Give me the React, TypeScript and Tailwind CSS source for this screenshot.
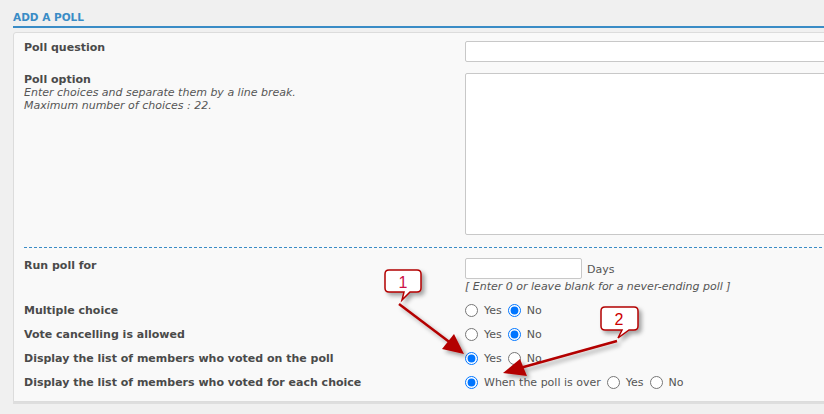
import React from 'react';

const font = { fontFamily: '"DejaVu Sans", Verdana, sans-serif' };

const Radio = ({ checked, name }: { checked?: boolean; name: string }) => (
  <input type="radio" name={name} defaultChecked={checked} className="m-0 w-[13px] h-[13px]" />
);

const Label = ({ children }: { children: React.ReactNode }) => (
  <div className="font-bold text-[11px] leading-[13px] text-[#4a4a4a]">{children}</div>
);

const RadioRow = ({ label, children }: { label: string; children: React.ReactNode }) => (
  <div className="grid grid-cols-[441px_1fr] h-[24px] items-center">
    <Label>{label}</Label>
    <div className="flex items-center gap-[6px]">{children}</div>
  </div>
);

const Callouts = () => (
  <svg className="absolute inset-0 pointer-events-none" width="824" height="414">
    <defs>
      <filter id="sh" x="-30%" y="-30%" width="180%" height="180%">
        <feDropShadow dx="3" dy="3" stdDeviation="2" floodColor="#000" floodOpacity="0.35" />
      </filter>
    </defs>
    <g filter="url(#sh)">
      <line x1="399" y1="304" x2="452" y2="344" stroke="#b30000" strokeWidth="2.5" />
      <path d="M442 349 L464 354 L454 334 Z" fill="#b30000" />
      <line x1="617" y1="341" x2="520" y2="368" stroke="#b30000" strokeWidth="2.5" />
      <path d="M520 359 L503 373 L527 376 Z" fill="#b30000" />
      <path
        d="M389 270 H417 Q421 270 421 274 V288 Q421 292 417 292 H410 L402 300 L404 292 H389 Q385 292 385 288 V274 Q385 270 389 270 Z"
        fill="#fff"
        stroke="#b30000"
        strokeWidth="1.5"
      />
      <path
        d="M605 307 H634 Q638 307 638 311 V326 Q638 330 634 330 H629 L618 338 L622 330 H605 Q601 330 601 326 V311 Q601 307 605 307 Z"
        fill="#fff"
        stroke="#b30000"
        strokeWidth="1.5"
      />
    </g>
    <text x="403" y="288" textAnchor="middle" fontSize="16" fill="#cc1046" style={{ fontFamily: '"Liberation Sans", Arial, sans-serif' }}>1</text>
    <text x="619" y="325" textAnchor="middle" fontSize="16" fill="#cc0000" style={{ fontFamily: '"Liberation Sans", Arial, sans-serif' }}>2</text>
  </svg>
);

export default function App() {
  return (
    <div className="relative w-[824px] h-[414px] overflow-hidden bg-[#f0f0f0] pl-[13px] pt-[11px]" style={font}>
      <div className="w-[830px] border-b-2 border-[#3a8cc6] pb-[2px]">
        <h2 className="font-bold text-[10.5px] text-[#3a8cc6] leading-[13px]">ADD A POLL</h2>
      </div>
      <div className="mt-[4px] w-[830px] bg-[#f9f9f9] border border-[#dcdcdc] rounded-tl-[3px] shadow-[0_2px_0_#dedede] pl-[10px] pt-[8px] pb-[7px] text-[11px] leading-[13px] text-[#555]">
        <div className="grid grid-cols-[441px_1fr]">
          <Label>Poll question</Label>
          <input className="h-[21px] bg-white border border-[#c8c8c8] rounded-[2px]" />
        </div>
        <div className="grid grid-cols-[441px_1fr] mt-[11px]">
          <div>
            <Label>Poll option</Label>
            <div className="italic">Enter choices and separate them by a line break.</div>
            <div className="italic">Maximum number of choices : 22.</div>
          </div>
          <textarea className="h-[162px] bg-white border border-[#c8c8c8] rounded-[2px] resize-none" />
        </div>
        <div className="mt-[12px] border-t border-dashed border-[#3a8cc6]" />
        <div className="grid grid-cols-[441px_1fr] mt-[10px]">
          <div className="pt-[1px]"><Label>Run poll for</Label></div>
          <div>
            <div className="flex items-center gap-[5px]">
              <input className="w-[117px] h-[21px] bg-white border border-[#c8c8c8] rounded-[2px]" />
              <span className="pt-[2px]">Days</span>
            </div>
            <div className="italic mt-[1px]">[ Enter 0 or leave blank for a never-ending poll ]</div>
          </div>
        </div>
        <div className="mt-[5px]">
          <RadioRow label="Multiple choice">
            <Radio name="mc" /><span>Yes</span><Radio name="mc" checked /><span>No</span>
          </RadioRow>
          <RadioRow label="Vote cancelling is allowed">
            <Radio name="vc" /><span>Yes</span><Radio name="vc" checked /><span>No</span>
          </RadioRow>
          <RadioRow label="Display the list of members who voted on the poll">
            <Radio name="dp" checked /><span>Yes</span><Radio name="dp" /><span>No</span>
          </RadioRow>
          <RadioRow label="Display the list of members who voted for each choice">
            <Radio name="de" checked /><span>When the poll is over</span><Radio name="de" /><span>Yes</span><Radio name="de" /><span>No</span>
          </RadioRow>
        </div>
      </div>
      <Callouts />
    </div>
  );
}
